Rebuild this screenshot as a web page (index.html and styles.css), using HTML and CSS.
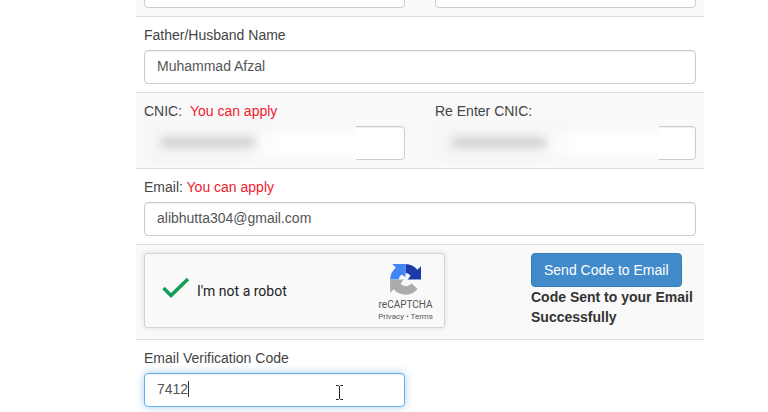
FILE: index.html
```html
<!DOCTYPE html>
<html lang="en">
<head>
  <meta charset="UTF-8" />
  <meta name="viewport" content="width=device-width, initial-scale=1.0" />
  <title>Registration</title>
  <link rel="stylesheet" href="styles.css">
</head>
<body>

  <form class="form">
    <div class="row row-first shaded">
      <input type="text" class="field" aria-label="First name">
      <input type="text" class="field" aria-label="Last name">
    </div>

    <div class="row">
      <div class="group wide">
        <label for="father">Father/Husband Name</label>
        <input type="text" class="field" id="father" value="Muhammad Afzal">
      </div>
    </div>

    <div class="row shaded">
      <div class="group">
        <label for="cnic">CNIC: &nbsp;<span class="error">You can apply</span></label>
        <input type="text" class="field" id="cnic">
        <span class="mask"></span>
      </div>
      <div class="group">
        <label for="recnic">Re Enter CNIC:</label>
        <input type="text" class="field" id="recnic">
        <span class="mask mask-long"></span>
      </div>
    </div>

    <div class="row">
      <div class="group wide">
        <label for="email">Email: <span class="error">You can apply</span></label>
        <input type="email" class="field" id="email" value="alibhutta304@gmail.com">
      </div>
    </div>

    <div class="row row-captcha shaded">
      <div class="captcha">
        <svg class="check" viewBox="0 0 28 22" width="28" height="22">
          <path d="M1.500 11 L9 18.500 L26 2" fill="none" stroke="#0f9d58" stroke-width="3.500"/>
        </svg>
        <span class="robot">I'm not a robot</span>
        <div class="brand">
          <svg viewBox="0 0 64 64" width="31" height="31">
            <path fill="#1c3aa9" d="M64 32V4.500l-7.600 7.600A32 32 0 0 0 32 .200v18.300c4 0 8 2 10.500 6L36.500 32z"/>
            <path fill="#4285f4" d="M32 .200H4.500l7.600 7.600A32 32 0 0 0 .200 32h18.300c0-4 2-8 6-10.500l7.500 6z"/>
            <path fill="#ababab" d="M.200 32v27.500l7.600-7.600A32 32 0 0 0 57 51.700L44 39.500c-4 7-16 9-22 .500L28.500 32z"/>
          </svg>
          <span class="brand-name">reCAPTCHA</span>
          <span class="brand-links"><a href="#">Privacy</a> • <a href="#">Terms</a></span>
        </div>
      </div>
      <div class="send">
        <button type="button" class="btn">Send Code to Email</button>
        <strong>Code Sent to your Email Successfully</strong>
      </div>
    </div>

    <div class="row">
      <div class="group">
        <label for="code">Email Verification Code</label>
        <input type="text" class="field active" id="code" value="7412">
        <span class="caret"></span>
        <svg class="pointer" viewBox="0 0 9 17" width="9" height="17">
          <path d="M1 1.500h2.500l1 1 1-1H8M4.500 2v13M1 15.500h2.500l1-1 1 1H8" fill="none" stroke="#222" stroke-width="1"/>
        </svg>
      </div>
    </div>
  </form>

</body>
</html>
```
FILE: styles.css
```css
* {
  box-sizing: border-box;
}

body {
  margin: 0;
  overflow: hidden;
  background-color: #fff;
  color: #444;
  font-family: "Liberation Sans", Arial, sans-serif;
  font-size: 14px;
  line-height: 20px;
}

.form {
  margin: 0 64px 0 136px;
}

.row {
  display: grid;
  grid-template-columns: 1fr 1fr;
  column-gap: 30px;
  padding: 8px;
  border-top: 1px solid #ddd;
}

.shaded {
  background-color: #f9f9f9;
}

/* the first row is scrolled partly out of view */
.row-first {
  margin-top: -35px;
}

.group {
  position: relative;
}

.wide {
  grid-column: 1 / 3;
}

label {
  display: block;
  margin-bottom: 5px;
}

.error {
  color: #f0202c;
}

.field {
  display: block;
  width: 100%;
  height: 34px;
  padding: 5px 12px 7px;
  border: 1px solid #ccc;
  border-radius: 4px;
  background-color: #fff;
  color: #555;
  font: inherit;
  box-shadow: inset 0 1px 1px rgba(0, 0, 0, 0.07);
}

.active {
  border-color: #66afe9;
  outline: none;
  box-shadow: inset 0 1px 1px rgba(0, 0, 0, 0.07), 0 0 8px rgba(102, 175, 233, 0.6);
}

/* blurred cover over the private number */
.mask {
  position: absolute;
  top: 20px;
  left: -6px;
  width: 218px;
  height: 42px;
  background:
    linear-gradient(to right, #f9f9f9, rgba(249, 249, 249, 0) 8%),
    linear-gradient(to right, #f6f6f6 45%, rgba(255, 255, 255, 0) 65%),
    linear-gradient(#f8f8f8 10%, #fff 45%, #fff 70%, #f8f8f8);
}

.mask::after {
  content: "";
  position: absolute;
  top: 16px;
  left: 22px;
  width: 96px;
  height: 11px;
  border-radius: 6px;
  background-color: #d2d2d2;
  filter: blur(4px);
}

.mask-long {
  width: 230px;
}

.row-captcha {
  grid-template-columns: 1fr 165px;
  padding-bottom: 11px;
}

.captcha {
  display: flex;
  align-items: center;
  width: 301px;
  height: 75px;
  padding: 0 11px 0 17px;
  border: 1px solid #d3d3d3;
  border-radius: 3px;
  box-shadow: 0 0 4px 1px rgba(0, 0, 0, 0.08);
  font-family: Roboto, sans-serif;
}

.check {
  margin-bottom: 5px;
}

.robot {
  margin-left: 7px;
  color: #222;
  font-size: 14px;
}

.brand {
  display: flex;
  flex-direction: column;
  align-items: center;
  margin-top: 4px;
  margin-left: auto;
  color: #555;
}

.brand-name {
  margin-top: 3px;
  font-size: 10px;
  line-height: 14px;
}

.brand-links {
  font-size: 8px;
  line-height: 10px;
}

.brand-links a {
  color: inherit;
  text-decoration: none;
}

.send strong {
  display: block;
  color: #333;
}

.btn {
  display: block;
  height: 34px;
  padding: 0 12px;
  border: 1px solid #357ebd;
  border-radius: 4px;
  background-color: #428bca;
  color: #fff;
  font: inherit;
  white-space: nowrap;
  cursor: pointer;
}

.caret {
  position: absolute;
  left: 44px;
  top: 33px;
  width: 1px;
  height: 16px;
  background-color: #333;
}

.pointer {
  position: absolute;
  left: 191px;
  top: 36px;
}
```
